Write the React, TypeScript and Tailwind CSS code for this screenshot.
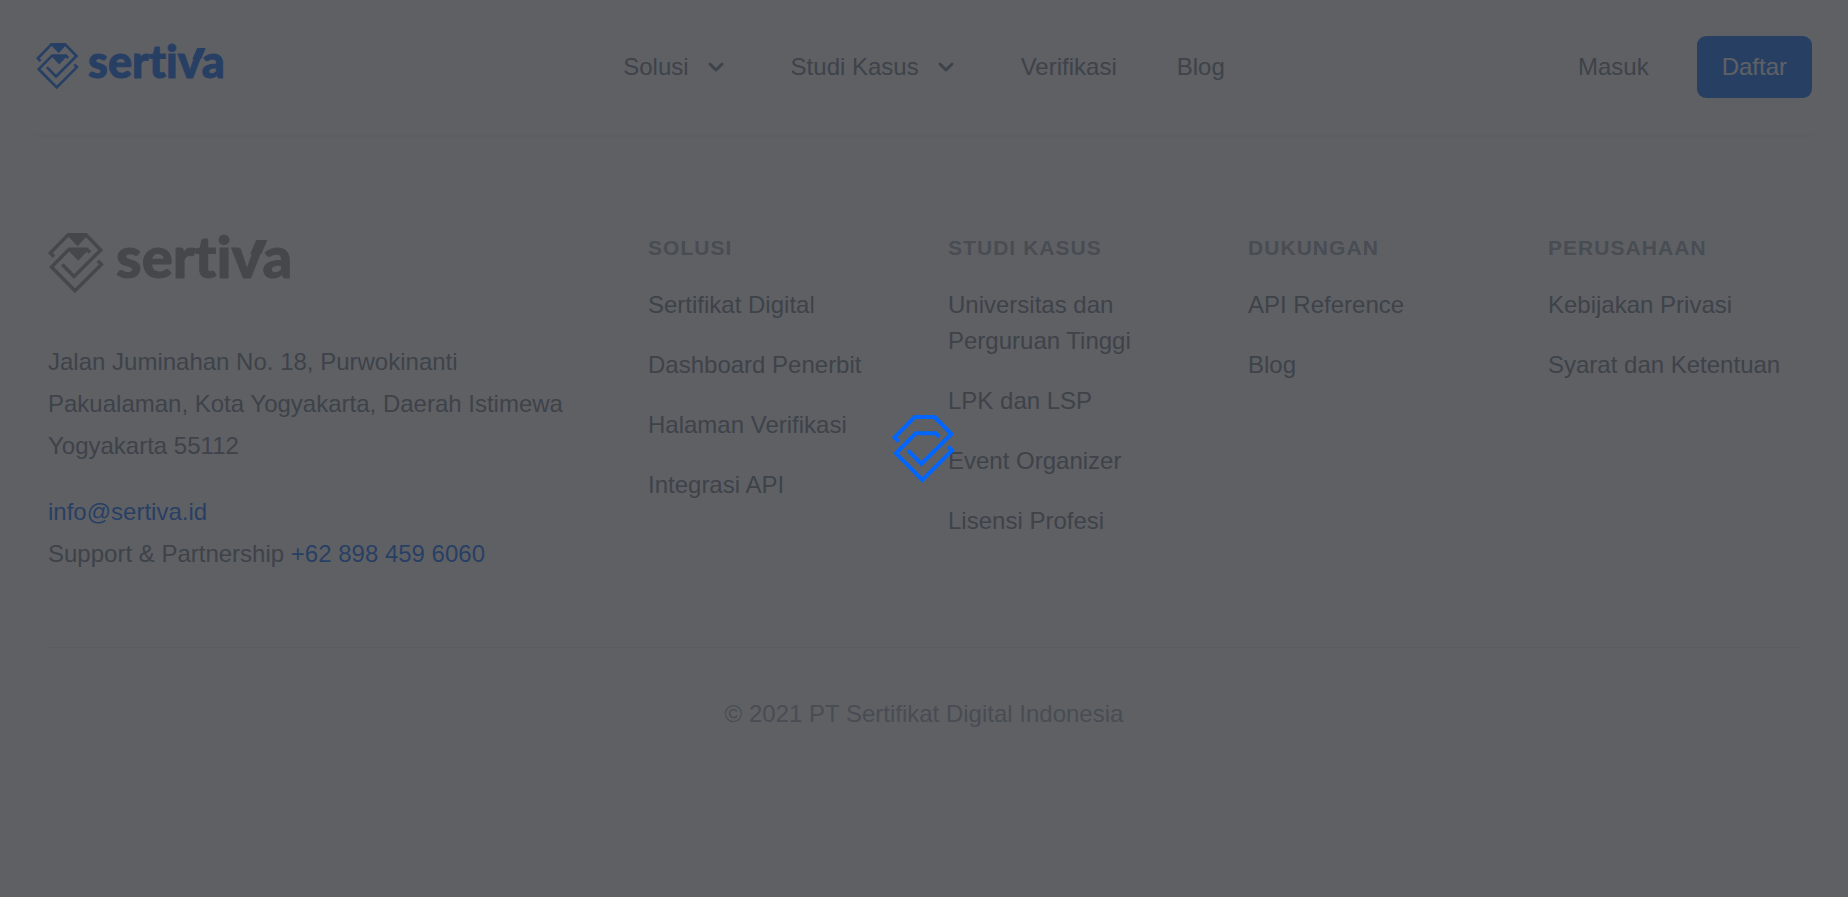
const navItems = [
  { label: "Solusi", menu: true },
  { label: "Studi Kasus", menu: true },
  { label: "Verifikasi", menu: false },
  { label: "Blog", menu: false },
];

const footerColumns = [
  {
    title: "Solusi",
    links: ["Sertifikat Digital", "Dashboard Penerbit", "Halaman Verifikasi", "Integrasi API"],
  },
  {
    title: "Studi Kasus",
    links: ["Universitas dan Perguruan Tinggi", "LPK dan LSP", "Event Organizer", "Lisensi Profesi"],
  },
  { title: "Dukungan", links: ["API Reference", "Blog"] },
  { title: "Perusahaan", links: ["Kebijakan Privasi", "Syarat dan Ketentuan"] },
];

function MarkLines() {
  return (
    <g fill="none" stroke="currentColor" strokeWidth="12" strokeMiterlimit="10">
      <path d="M20 80 8 67 68 6h60l50 51-90 90-40-41" />
      <path d="M142 66 131 55H71L12 115l79 80 89-89-12-12" />
    </g>
  );
}

function LogoMark({ className }: { className: string }) {
  return (
    <svg viewBox="0 0 189 204" className={className} fill="currentColor" aria-hidden="true">
      <MarkLines />
      <path d="M64 8h70l-34 37zM67 57h70l-35 37z" />
    </svg>
  );
}

function Wordmark({ className }: { className: string }) {
  return (
    <span
      className={`font-[Lato,sans-serif] font-black [font-variant-ligatures:none] [-webkit-text-stroke:1px_currentColor] ${className}`}
    >
      serti
      <span className="relative">
        v
        <svg
          viewBox="0 0 20 14"
          className="absolute top-[0.32em] right-[-0.09em] h-[0.246em]"
          fill="currentColor"
          aria-hidden="true"
        >
          <path d="M9 0h11l-6 14H3z" />
        </svg>
      </span>
      a
    </span>
  );
}

function ChevronDown() {
  return (
    <svg viewBox="0 0 20 20" className="size-[30px]" fill="currentColor" aria-hidden="true">
      <path
        fillRule="evenodd"
        d="M5.293 7.293a1 1 0 011.414 0L10 10.586l3.293-3.293a1 1 0 111.414 1.414l-4 4a1 1 0 01-1.414 0l-4-4a1 1 0 010-1.414z"
      />
    </svg>
  );
}

function Header() {
  return (
    <header className="mx-9 flex items-center border-b-3 border-gray-100 py-9">
      <div className="flex flex-1">
        <a href="#" className="flex h-12 items-start gap-[9px] text-[#0066ff]">
          <LogoMark className="w-[43px]" />
          <Wordmark className="text-[45px] leading-[36px]" />
        </a>
      </div>
      <nav className="flex gap-[60px] text-gray-500">
        {navItems.map((item) =>
          item.menu ? (
            <button key={item.label} type="button" className="flex items-center gap-3">
              {item.label}
              <ChevronDown />
            </button>
          ) : (
            <a key={item.label} href="#">
              {item.label}
            </a>
          ),
        )}
      </nav>
      <div className="flex flex-1 items-center justify-end gap-12">
        <a href="#" className="text-gray-500">
          Masuk
        </a>
        <a href="#" className="rounded-[9px] border border-transparent bg-[#0066ff] bg-origin-border px-6 py-3 text-white">
          Daftar
        </a>
      </div>
    </header>
  );
}

function Footer() {
  return (
    <footer className="px-12 pt-24">
      <div className="grid grid-cols-3 gap-12">
        <div className="leading-[42px] text-gray-500">
          <div className="flex h-15 items-start gap-3 text-[#8a8a8a]">
            <LogoMark className="w-14" />
            <Wordmark className="text-[58px] leading-[46px]" />
          </div>
          <p className="mt-12">
            Jalan Juminahan No. 18, Purwokinanti
            <br />
            Pakualaman, Kota Yogyakarta, Daerah Istimewa Yogyakarta 55112
          </p>
          <p className="mt-6">
            <a href="mailto:info@sertiva.id" className="text-[#0066ff]">
              info@sertiva.id
            </a>
            <br />
            Support &amp; Partnership{" "}
            <a href="tel:+628984596060" className="text-[#0066ff]">
              +62 898 459 6060
            </a>
          </p>
        </div>
        <div className="col-span-2 grid grid-cols-4 gap-12">
          {footerColumns.map((column) => (
            <div key={column.title}>
              <h3 className="text-[21px] leading-[30px] font-bold tracking-wider text-gray-400 uppercase">
                {column.title}
              </h3>
              <ul className="mt-6 flex flex-col gap-6 text-gray-500">
                {column.links.map((link) => (
                  <li key={link}>
                    <a href="#">{link}</a>
                  </li>
                ))}
              </ul>
            </div>
          ))}
        </div>
      </div>
      <div className="mt-[72px] border-t border-gray-200 pt-12">
        <p className="text-center text-gray-400">&copy; 2021 PT Sertifikat Digital Indonesia</p>
      </div>
    </footer>
  );
}

function LoadingOverlay() {
  return (
    <div className="fixed inset-0 flex items-center justify-center bg-[#33353a]/79" role="status" aria-label="Loading">
      <svg viewBox="0 0 192 204" className="w-16 text-[#0066ff]" aria-hidden="true">
        <MarkLines />
      </svg>
    </div>
  );
}

export default function App() {
  return (
    <div className="min-h-screen bg-white font-['Liberation_Sans',Arial,sans-serif] text-2xl leading-9">
      <Header />
      <Footer />
      <LoadingOverlay />
    </div>
  );
}
